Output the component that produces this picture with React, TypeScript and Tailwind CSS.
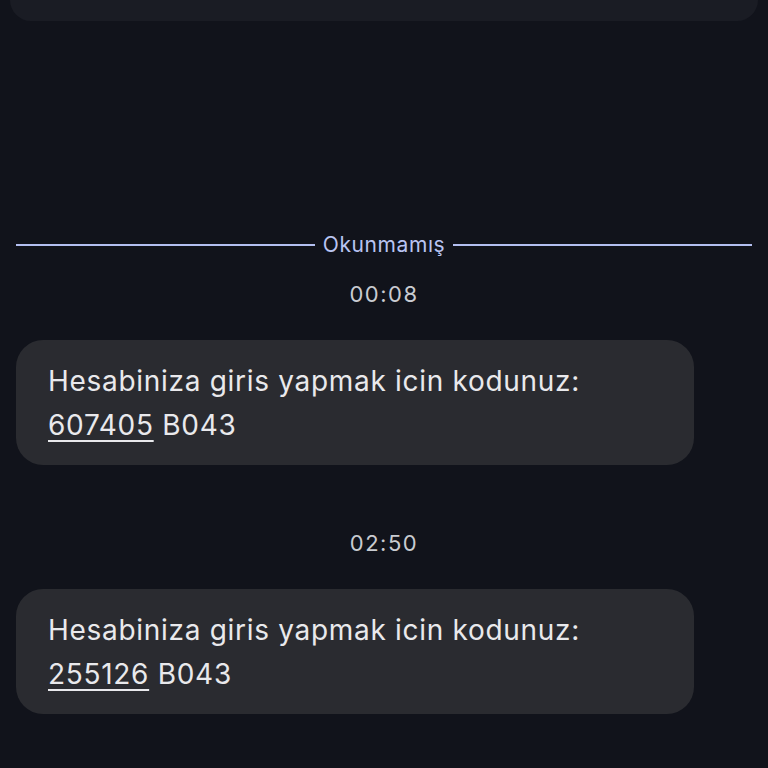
const messages = [
  { time: '00:08', code: '607405', tail: 'B043' },
  { time: '02:50', code: '255126', tail: 'B043' },
]

export default function App() {
  return (
    <div className="min-h-[768px] w-[768px] overflow-hidden bg-[#11131b] font-['Inter',sans-serif]">
      {/* previous message, cut off at the top */}
      <div className="mx-[10px] h-[21px] rounded-b-[24px] bg-[#1a1c24]" />

      <div className="flex flex-col px-4 pt-[210px]">
        <div className="flex h-[28px] items-center gap-2">
          <div className="h-[2px] flex-1 bg-[#b3bff0]" />
          <span className="text-[21px] tracking-[0.6px] text-[#b9c4f2]">Okunmamış</span>
          <div className="h-[2px] flex-1 bg-[#b3bff0]" />
        </div>

        {messages.map((m, i) => (
          <div key={m.time} className="flex flex-col">
            <p className={`${i === 0 ? 'mt-[21px]' : 'mt-[64px]'} text-center text-[22px] leading-[28px] tracking-[1.5px] text-[#c9cbd1]`}>
              {m.time}
            </p>
            <div className="mt-[32px] w-[678px] rounded-[27px] bg-[#2a2b30] pb-[18px] pl-8 pr-6 pt-[19px] text-[28px] leading-[44px] tracking-[0.7px] text-[#e9e9ec]">
              <p>Hesabiniza giris yapmak icin kodunuz:</p>
              <p>
                <span className="underline decoration-2 underline-offset-[5px]">{m.code}</span> {m.tail}
              </p>
            </div>
          </div>
        ))}
      </div>
    </div>
  )
}
